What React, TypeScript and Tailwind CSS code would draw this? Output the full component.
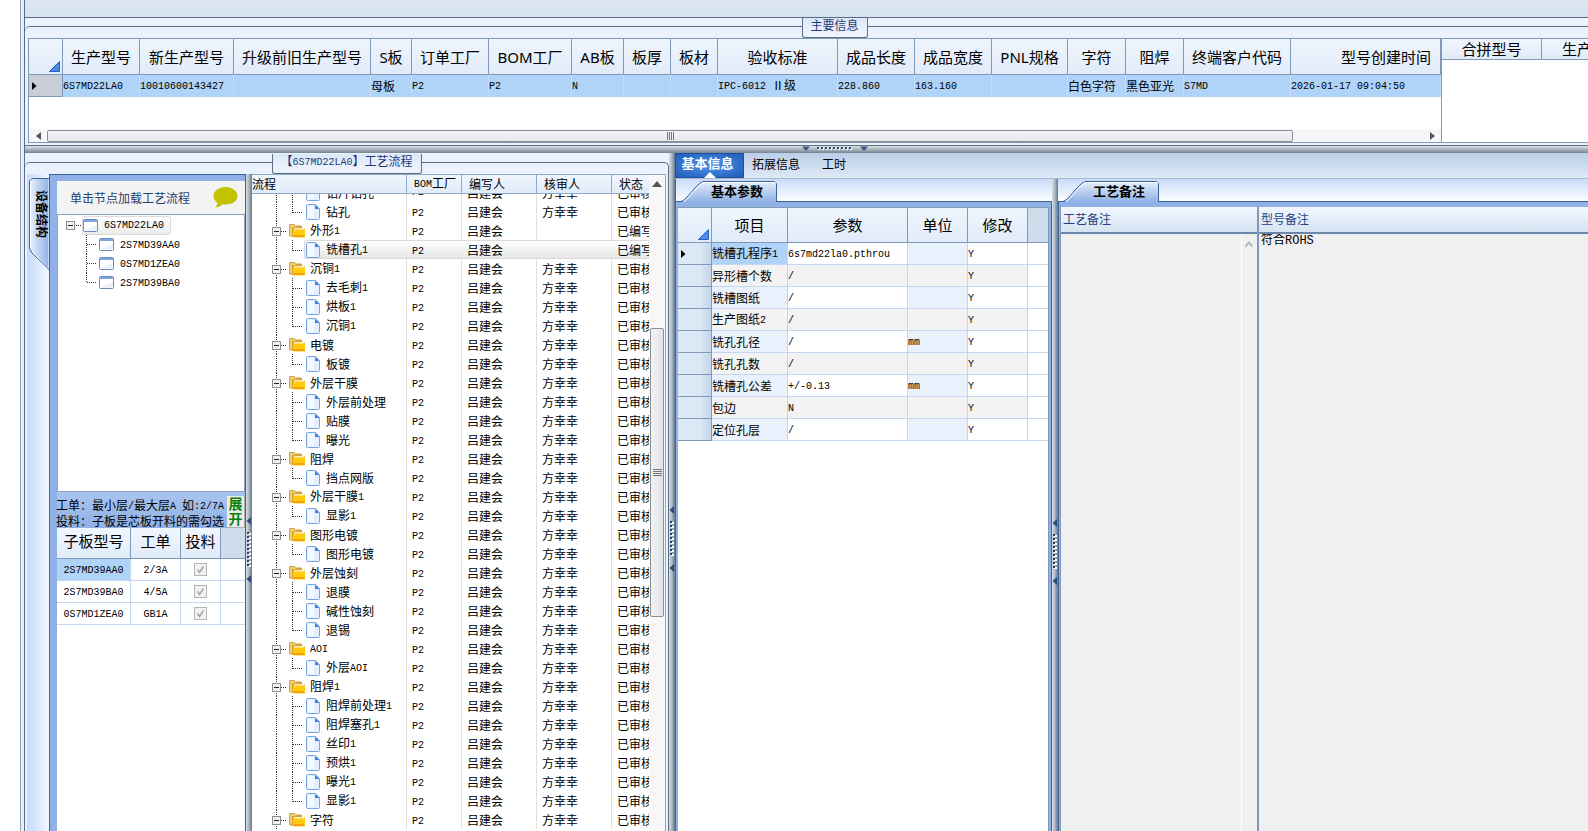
import { Fragment, type ReactNode } from "react";

/** A row of the process tree: a folder groups the steps that follow it. */
interface ProcessRow {
    name: string;
    kind: "folder" | "step";
    /** Last step of its folder, so the guide line stops here. */
    last?: boolean;
    reviewer?: string;
    status?: string;
    selected?: boolean;
}

const mainColumns = [
    { label: "生产型号", width: "w-[77px]", value: "6S7MD22LA0" },
    { label: "新生产型号", width: "w-[94px]", value: "10010600143427" },
    { label: "升级前旧生产型号", width: "w-[137px]", value: "" },
    { label: "S板", width: "w-[41px]", value: "母板" },
    { label: "订单工厂", width: "w-[77px]", value: "P2" },
    { label: "BOM工厂", width: "w-[83px]", value: "P2" },
    { label: "AB板", width: "w-[52px]", value: "N" },
    { label: "板厚", width: "w-[47px]", value: "" },
    { label: "板材", width: "w-[47px]", value: "" },
    { label: "验收标准", width: "w-[120px]", value: "IPC-6012 Ⅱ级" },
    { label: "成品长度", width: "w-[77px]", value: "228.860" },
    { label: "成品宽度", width: "w-[77px]", value: "163.160" },
    { label: "PNL规格", width: "w-[76px]", value: "" },
    { label: "字符", width: "w-[58px]", value: "白色字符" },
    { label: "阻焊", width: "w-[58px]", value: "黑色亚光" },
    { label: "终端客户代码", width: "w-[107px]", value: "S7MD" },
    { label: "型号创建时间", width: "w-[150px]", value: "2026-01-17 09:04:50", right: true },
];

const childBoards = ["2S7MD39AA0", "0S7MD1ZEA0", "2S7MD39BA0"];

const workOrders = [
    { board: "2S7MD39AA0", order: "2/3A" },
    { board: "2S7MD39BA0", order: "4/5A" },
    { board: "0S7MD1ZEA0", order: "GB1A" },
];

const folder = (name: string): ProcessRow => ({ name, kind: "folder" });
const step = (name: string, last = false): ProcessRow => ({ name, kind: "step", last });

const processRows: ProcessRow[] = [
    step("钻片钻孔"),
    step("钻孔", true),
    { name: "外形1", kind: "folder", reviewer: "", status: "已编写" },
    { name: "铣槽孔1", kind: "step", last: true, reviewer: "", status: "已编写", selected: true },
    folder("沉铜1"),
    step("去毛刺1"),
    step("烘板1"),
    step("沉铜1", true),
    folder("电镀"),
    step("板镀", true),
    folder("外层干膜"),
    step("外层前处理"),
    step("贴膜"),
    step("曝光", true),
    folder("阻焊"),
    step("挡点网版", true),
    folder("外层干膜1"),
    step("显影1", true),
    folder("图形电镀"),
    step("图形电镀", true),
    folder("外层蚀刻"),
    step("退膜"),
    step("碱性蚀刻"),
    step("退锡", true),
    folder("AOI"),
    step("外层AOI", true),
    folder("阻焊1"),
    step("阻焊前处理1"),
    step("阻焊塞孔1"),
    step("丝印1"),
    step("预烘1"),
    step("曝光1"),
    step("显影1", true),
    folder("字符"),
];

const parameters = [
    { name: "铣槽孔程序1", value: "6s7md22la0.pthrou", unit: "" },
    { name: "异形槽个数", value: "/", unit: "" },
    { name: "铣槽图纸", value: "/", unit: "" },
    { name: "生产图纸2", value: "/", unit: "" },
    { name: "铣孔孔径", value: "/", unit: "mm" },
    { name: "铣孔孔数", value: "/", unit: "" },
    { name: "铣槽孔公差", value: "+/-0.13", unit: "mm" },
    { name: "包边", value: "N", unit: "" },
    { name: "定位孔层", value: "/", unit: "" },
];

/** Sets latin runs in the narrow mono face and leaves Chinese in the body face. */
function Txt({ children }: { children: string }) {
    return (
        <>
            {children.split(/([\x20-\x7e]+)/).map((part, i) =>
                i % 2 ? (
                    <span key={i} className="align-[1px] font-['Liberation_Mono'] text-[10px] whitespace-pre">
                        {part}
                    </span>
                ) : (
                    <Fragment key={i}>{part}</Fragment>
                )
            )}
        </>
    );
}

function BoardIcon() {
    return (
        <svg width="15" height="13" viewBox="0 0 15 13" className="shrink-0">
            <rect x="0.5" y="0.5" width="14" height="12" rx="1" fill="#fff" stroke="#6a8cc0" />
            <path d="M1 11.5h13V6z" fill="#e8f1fc" />
            <rect x="1" y="1" width="13" height="2" fill="#7ea6dd" />
        </svg>
    );
}

function FolderIcon() {
    return (
        <svg width="16" height="14" viewBox="0 0 16 14" className="shrink-0">
            <path d="M0.5 12V0.500h5l1 1.500h6v10z" fill="#f3cf70" stroke="#c9a353" />
            <path d="M3 13V3h4l1-1h5v2h2.500v9z" fill="#d9a13a" />
            <path d="M5 4h10v2H5z" fill="#fff0b8" />
            <rect x="4" y="5.500" width="12" height="8" rx="0.500" fill="#ffcb0a" />
            <path d="M4.500 11h11v2h-11z" fill="#f5a20a" />
        </svg>
    );
}

function PageIcon() {
    return (
        <svg width="14" height="16" viewBox="0 0 14 16" className="shrink-0">
            <path d="M1.500 0.500H9.500L13.500 4.500V14.500a1 1 0 0 1-1 1H1.500a1 1 0 0 1-1-1V1.500a1 1 0 0 1 1-1z" fill="#e3efff" stroke="#78a5e4" />
            <path d="M2 2h6v12H2z" fill="#fafdff" opacity="0.700" />
            <path d="M9 1v4h4.500z" fill="#3f7ee0" />
        </svg>
    );
}

const dots = { stroke: "#333", strokeDasharray: "1 1" };

function MinusBox({ x, y }: { x: number; y: number }) {
    return (
        <g>
            <rect x={x + 0.5} y={y + 0.5} width="8" height="8" fill="#f1f1f1" stroke="#8e8e8e" />
            <path d={`M${x + 2} ${y + 4.5}h5`} stroke="#222" />
        </g>
    );
}

function HeaderCorner() {
    return (
        <svg width="11" height="11" viewBox="0 0 11 11" className="mr-[2px] mb-[2px] ml-auto">
            <path d="M10.500 0.500v10h-10z" fill="#4a8ae8" stroke="#2a5fb8" />
        </svg>
    );
}

function RowPointer() {
    return (
        <svg width="5" height="8" viewBox="0 0 5 8" className="ml-[3px]">
            <path d="M0 0l4.500 4L0 8z" fill="#000" />
        </svg>
    );
}

/** The grip in the middle of a splitter: two arrows with a dotted bar between them. */
function SplitterGrip({ vertical = false }: { vertical?: boolean }) {
    const bars = Array.from({ length: 9 }, (_, i) => i * 4);
    return vertical ? (
        <svg width="6" height="66" viewBox="0 0 6 66" className="shrink-0">
            <path d="M5 0v8L0.500 4zM5 58v8L0.500 62z" fill="#2f4a7c" />
            {bars.map(y => (
                <g key={y}>
                    <rect x="2" y={y + 16} width="3" height="2" fill="#fff" />
                    <rect x="1" y={y + 15} width="2" height="2" fill="#27406f" />
                </g>
            ))}
        </svg>
    ) : (
        <svg width="66" height="6" viewBox="0 0 66 6" className="shrink-0">
            <path d="M0 0.500h8L4 5zM58 0.500h8L62 5z" fill="#3b5589" />
            {bars.map(x => (
                <g key={x}>
                    <rect x={x + 16} y="2" width="2" height="2" fill="#fff" />
                    <rect x={x + 15} y="1" width="2" height="2" fill="#3b4f78" />
                </g>
            ))}
        </svg>
    );
}

function VerticalSplitter() {
    return (
        <div className="flex w-[6px] shrink-0 items-center bg-linear-to-r from-[#d9e0e4] via-[#a9b5bf] to-[#64788c]">
            <SplitterGrip vertical />
        </div>
    );
}

function GroupTitle({ children }: { children: string }) {
    return (
        <h2 className="absolute -top-[9px] left-1/2 z-10 h-[20px] -translate-x-1/2 rounded-b-[3px] border border-t-0 border-[#5a6d87] bg-linear-to-b from-[#dce8f7] to-[#f1f6fd] px-[8px] leading-[13px] whitespace-nowrap text-[#1f3a78]">
            <Txt>{children}</Txt>
        </h2>
    );
}

/** Tab strip with one slanted tab. */
function SlantTab({ children }: { children: string }) {
    return (
        <div className="relative h-[23px] shrink-0 border-b border-[#3c639c] bg-linear-to-b from-[#c9dbfa] to-[#fbfdff] pt-[2px] pl-[5px]">
            <svg width="97" height="21" viewBox="0 0 97 21" className="absolute top-[2px] left-[5px]">
                <defs>
                    <linearGradient id="slant" x2="0" y2="1">
                        <stop offset="0" stopColor="#e4effc" />
                        <stop offset="1" stopColor="#8fb1e5" />
                    </linearGradient>
                </defs>
                <path d="M0 21C6 20 14 4 22 0.500H93.500L95.500 2.500V21z" fill="url(#slant)" />
                <path d="M0 20.500C6 19 14 4 22 0.500H93.500L95.500 2.500V21" fill="none" stroke="#3c639c" />
                <path d="M3 20.500C9 17 16 4 23 1.500H94.500" fill="none" stroke="#fff" />
            </svg>
            <button type="button" className="relative ml-[30px] h-[20px] text-[13px] leading-[18px] font-bold text-black">
                {children}
            </button>
        </div>
    );
}

function MainInfo() {
    return (
        <section className="relative flex h-[128px] shrink-0 flex-col bg-[#eaf3fd] pt-[8px]">
            <div className="relative flex min-h-0 flex-1 flex-col rounded-tl-[5px] border-t border-b border-[#5a6d87] pt-[11px] pb-[2px] pl-[3px]">
                <GroupTitle>主要信息</GroupTitle>
                <div className="flex min-h-0 flex-1 border-y border-l border-[#8199b8] bg-white">
                    <div className="flex w-[1413px] shrink-0 flex-col border-r border-[#8199b8]">
                        <table className="w-full table-fixed border-separate border-spacing-0">
                            <thead>
                                <tr className="h-[36px] bg-linear-to-b from-[#eff5fd] to-[#e0ebf9]">
                                    <th className="w-[34px] border-r border-b border-[#8199b8] p-0 align-bottom">
                                        <HeaderCorner />
                                    </th>
                                    {mainColumns.map(col => (
                                        <th
                                            key={col.label}
                                            className={`${col.width} ${col.right ? "pr-[9px] text-right" : "text-center"} border-r border-b border-[#8199b8] p-0 font-[Noto_Sans,Noto_Sans_CJK_SC,sans-serif] text-[15px] font-normal whitespace-nowrap`}
                                        >
                                            {col.label}
                                        </th>
                                    ))}
                                </tr>
                            </thead>
                            <tbody>
                                <tr className="h-[22px] bg-[#b0d3f8]">
                                    <td className="border-r border-b border-[#8199b8] bg-[#c8ced5] p-0">
                                        <RowPointer />
                                    </td>
                                    {mainColumns.map(col => (
                                        <td key={col.label} className="border-r border-[#c4dcf7] p-0 whitespace-nowrap">
                                            <Txt>{col.value}</Txt>
                                        </td>
                                    ))}
                                </tr>
                            </tbody>
                        </table>
                        <div className="mt-auto flex h-[13px] items-center bg-[#f5f6f7] pr-[6px] pl-[7px]">
                            <svg width="5" height="8" viewBox="0 0 5 8"><path d="M5 0v8L0 4z" fill="#555" /></svg>
                            <div className="ml-[6px] flex h-[12px] w-[1246px] items-center justify-center gap-px rounded-xs border border-[#8a8f96] bg-linear-to-b from-[#f4f5f7] to-[#e6e8ec]">
                                {[0, 1, 2, 3].map(i => <i key={i} className="h-[8px] w-px bg-[#777]" />)}
                            </div>
                            <svg width="5" height="8" viewBox="0 0 5 8" className="ml-auto"><path d="M0 0v8l5-4z" fill="#555" /></svg>
                        </div>
                    </div>
                    <div className="min-w-0 flex-1 overflow-hidden">
                        <table className="w-full table-fixed border-separate border-spacing-0">
                            <thead>
                                <tr className="h-[21px] bg-linear-to-b from-[#eff5fd] to-[#e0ebf9] text-[15px] leading-[18px]">
                                    <th className="w-[100px] border-r border-b border-[#8199b8] p-0 text-center font-normal">合拼型号</th>
                                    <th className="border-b border-[#8199b8] p-0 pl-[20px] text-left font-normal">生产型号</th>
                                </tr>
                            </thead>
                        </table>
                    </div>
                </div>
            </div>
        </section>
    );
}

function BoardTree() {
    return (
        <ul className="h-[278px] shrink-0 border border-[#8f9fc0] bg-white pt-px pl-[8px]">
            <li>
                <div className="flex h-[19px] items-center">
                    <button type="button" aria-label="6S7MD22LA0" className="shrink-0">
                        <svg width="16" height="19" viewBox="0 0 16 19">
                            <path d="M10 9.500h6" {...dots} />
                            <MinusBox x={0} y={5} />
                        </svg>
                    </button>
                    <span className="flex h-[19px] items-center gap-[6px] rounded-xs border border-[#dcdcdc] bg-linear-to-b from-white to-[#ececec] pr-[6px]">
                        <BoardIcon />
                        <Txt>6S7MD22LA0</Txt>
                    </span>
                </div>
                <ul>
                    {childBoards.map((board, i) => (
                        <li key={board} className="flex h-[19px] items-center">
                            <svg width="33" height="19" viewBox="0 0 33 19" className="shrink-0">
                                <path d={`M20.500 0V${i === childBoards.length - 1 ? 10 : 19}M21 9.500h10`} {...dots} />
                            </svg>
                            <BoardIcon />
                            <span className="ml-[6px]"><Txt>{board}</Txt></span>
                        </li>
                    ))}
                </ul>
            </li>
        </ul>
    );
}

function WorkOrders() {
    const head = "border-r border-b border-[#8199b8] p-0 pb-[4px] text-center text-[15px] font-normal";
    const cell = "border-r border-b border-[#c5d7f0] p-0 text-center";
    return (
        <table className="w-full table-fixed border-separate border-spacing-0">
            <thead>
                <tr className="h-[31px] bg-linear-to-b from-[#f1f6fd] to-[#e0ebf9]">
                    <th className={`w-[74px] ${head}`}>子板型号</th>
                    <th className={`w-[50px] ${head}`}>工单</th>
                    <th className={`w-[40px] ${head}`}>投料</th>
                    <th className="border-b border-[#8199b8] bg-[#cfdcec] p-0" />
                </tr>
            </thead>
            <tbody>
                {workOrders.map((row, i) => (
                    <tr key={row.board} className="h-[22px]">
                        <td className={`${cell} ${i === 0 ? "bg-[#b0d3f8]" : ""}`}><Txt>{row.board}</Txt></td>
                        <td className={cell}><Txt>{row.order}</Txt></td>
                        <td className={cell}>
                            <span className="relative mx-auto block size-[13px]">
                                <input
                                    type="checkbox"
                                    aria-label={row.board}
                                    defaultChecked
                                    disabled
                                    className="block size-[13px] appearance-none border border-[#b4b4b4] bg-[#f2f2f2]"
                                />
                                <svg width="13" height="13" viewBox="0 0 13 13" className="pointer-events-none absolute inset-0">
                                    <path d="M3.500 6.500l2 3 4-6" fill="none" stroke="#a3a3a3" strokeWidth="1.500" />
                                </svg>
                            </span>
                        </td>
                        <td className="border-b border-[#c5d7f0] p-0" />
                    </tr>
                ))}
            </tbody>
        </table>
    );
}

function DevicePanel() {
    return (
        <div className="flex w-[219px] shrink-0">
            <div className="relative w-[22px] shrink-0 bg-linear-to-r from-[#c6dafb] to-[#f2f7ff]">
                <svg width="20" height="92" viewBox="0 0 20 92" className="absolute top-[4px] right-0">
                    <defs>
                        <linearGradient id="side">
                            <stop offset="0" stopColor="#e4effc" />
                            <stop offset="1" stopColor="#8fb1e5" />
                        </linearGradient>
                    </defs>
                    <path d="M20 0.500H4L1.500 3V70L4 75L20 91z" fill="url(#side)" stroke="#fff" />
                    <path d="M20 0.500H3L0.500 3V70L3 75L20 91.500" fill="none" stroke="#3c639c" />
                </svg>
                <button type="button" className="absolute top-[16px] left-[8px] text-[12px] leading-[14px] font-bold [writing-mode:vertical-rl] [text-orientation:sideways]">
                    设备结构
                </button>
            </div>
            <div className="flex min-w-0 flex-1 flex-col border-x border-t border-[#3c639c] bg-[#8fb1e5] pt-[6px] pl-[7px]">
                <div className="flex h-[33px] shrink-0 items-center bg-[#f3f3f3] pr-[7px] pl-[13px] text-[#26406e]">
                    <span>单击节点加载工艺流程</span>
                    <svg width="25" height="21" viewBox="0 0 25 21" className="ml-auto">
                        <path d="M12.500 0C19 0 24.500 4 24.500 9S19 17.500 12.500 17.500c-1 0-2-.1-3-.3C8 19 5 20.500 2 20.500c1.500-1.200 2.300-2.800 2.300-4.800C1.800 14 .5 11.600.5 9 .5 4 6 0 12.500 0z" fill="#c2c200" />
                    </svg>
                </div>
                <BoardTree />
                <div className="flex h-[36px] shrink-0 justify-between bg-linear-to-b from-[#a9c4ee] to-[#8fb1e5] pt-[4px]">
                    <p className="-ml-px pt-[2px] leading-[14px] whitespace-nowrap text-black">
                        <Txt>工单：最小层/最大层A 如:2/7A</Txt>
                        <br />
                        <Txt>投料：子板是芯板开料的需勾选</Txt>
                    </p>
                    <button type="button" className="flex h-[32px] w-[18px] shrink-0 flex-col items-center border-r border-b border-[#aaa] bg-[#ececec] text-[14px] leading-[15px] font-bold text-[#0a820a]">
                        <span>展</span>
                        <span>开</span>
                    </button>
                </div>
                <div className="flex-1 bg-white">
                    <WorkOrders />
                </div>
            </div>
        </div>
    );
}

/** Tree guides, icon and name of one process row. */
function ProcessName({ row }: { row: ProcessRow }) {
    if (row.kind === "folder") {
        return (
            <div className="flex h-[19px] shrink-0 items-center">
                <button type="button" aria-label={row.name} className="shrink-0">
                    <svg width="37" height="19" viewBox="0 0 37 19" className="block">
                        <path d="M24.500 0v19M29 10.500h6" {...dots} />
                        <MinusBox x={20} y={6} />
                    </svg>
                </button>
                <FolderIcon />
                <span className="ml-[5px]"><Txt>{row.name}</Txt></span>
            </div>
        );
    }
    return (
        <div className="flex h-[19px] shrink-0 items-center">
            <svg width="52" height="19" viewBox="0 0 52 19" className="block shrink-0">
                <path d={`M24.500 0v19M40.500 0V${row.last ? 11 : 19}M41 10.500h10`} {...dots} />
            </svg>
            <div className={row.selected ? "flex h-[19px] flex-1 items-center rounded-l-xs border border-r-0 border-[#dadada] bg-linear-to-b from-white to-[#e6e6e6] pl-px" : "flex flex-1 items-center pl-[2px]"}>
                <PageIcon />
                <span className="ml-[6px]"><Txt>{row.name}</Txt></span>
            </div>
        </div>
    );
}

function ProcessTable() {
    const head = "border-r border-b border-[#8fa9c8] p-0 text-left leading-[16px] font-normal";
    return (
        <table className="w-full table-fixed border-separate border-spacing-0">
            <thead>
                <tr className="h-[18px] bg-linear-to-b from-[#eff5fd] to-[#e0ebf9]">
                    <th className={`w-[155px] ${head}`}>流程</th>
                    <th className={`w-[55px] pl-[7px]! ${head}`}><Txt>BOM工厂</Txt></th>
                    <th className={`w-[75px] pl-[7px]! ${head}`}>编写人</th>
                    <th className={`w-[75px] pl-[7px]! ${head}`}>核审人</th>
                    <th className="border-b border-[#8fa9c8] p-0 pl-[7px] text-left leading-[16px] font-normal">状态</th>
                </tr>
            </thead>
            <tbody>
                {processRows.map((row, i) => {
                    // the first row is scrolled half under the header
                    const box = i === 0 ? "flex h-[8px] flex-col justify-end overflow-hidden" : "flex h-[19px] flex-col overflow-hidden";
                    const cell = row.selected
                        ? "border-y border-[#dadada] bg-linear-to-b from-white to-[#e6e6e6] p-0"
                        : "border-r border-[#e0e0e0] p-0";
                    const inner = (text: ReactNode) => (
                        <div className={row.selected ? "h-[17px] overflow-hidden leading-[17px]" : `${box} leading-[19px]`}>
                            <span className="block shrink-0 pl-[5px] whitespace-nowrap">{text}</span>
                        </div>
                    );
                    return (
                        <tr key={i}>
                            <td className={row.selected ? "p-0" : cell}>
                                <div className={box}><ProcessName row={row} /></div>
                            </td>
                            <td className={cell}>{inner(<Txt>P2</Txt>)}</td>
                            <td className={cell}>{inner("吕建会")}</td>
                            <td className={cell}>{inner(row.reviewer ?? "方幸幸")}</td>
                            <td className={`${cell} border-r-0!`}>{inner(row.status ?? "已审核")}</td>
                        </tr>
                    );
                })}
            </tbody>
        </table>
    );
}

function ProcessGroup() {
    return (
        <section className="flex w-[644px] shrink-0 bg-[#eaf3fd] pt-[9px]">
            <div className="relative flex min-w-0 flex-1 rounded-t-[5px] border-t border-r border-[#5a6d87] pt-[11px] pr-[2px] pl-[2px]">
                <GroupTitle>【6S7MD22LA0】工艺流程</GroupTitle>
                <DevicePanel />
                <VerticalSplitter />
                <div className="flex min-w-0 flex-1 border-t border-r border-[#8fa9c8] bg-white">
                    <div className="min-w-0 flex-1 overflow-hidden"><ProcessTable /></div>
                    <div className="flex w-[16px] shrink-0 flex-col items-center bg-[#f7f7f7] pt-[6px]">
                        <svg width="10" height="6" viewBox="0 0 10 6"><path d="M5 0l5 6H0z" fill="#555" /></svg>
                        <div className="mt-[141px] flex h-[289px] w-[14px] flex-col items-center justify-center gap-px rounded-xs border border-[#8a8f96] bg-linear-to-r from-[#f1f3f5] to-[#dfe3e8]">
                            {[0, 1, 2, 3].map(i => <i key={i} className="h-px w-[9px] bg-[#777]" />)}
                        </div>
                    </div>
                </div>
            </div>
        </section>
    );
}

function ParameterPanel() {
    const head = "border-r border-b border-[#8199b8] p-0 text-center text-[15px] font-normal";
    const cell = "border-r border-b border-[#c5d7f0] p-0 text-left whitespace-nowrap";
    return (
        <section className="flex w-[377px] shrink-0 flex-col border-l border-[#3c639c]">
            <SlantTab>基本参数</SlantTab>
            <div className="flex-1 border-r border-[#3c639c] bg-[#8fb1e5] px-[2px] pt-[5px]">
                <div className="h-full border-t border-r border-[#8199b8] bg-white">
                    <table className="w-full table-fixed border-separate border-spacing-0">
                        <thead>
                            <tr className="h-[35px] bg-linear-to-b from-[#eff5fd] to-[#e0ebf9]">
                                <th className="w-[34px] border-r border-b border-[#8199b8] p-0 align-bottom"><HeaderCorner /></th>
                                <th className={`w-[76px] ${head}`}>项目</th>
                                <th className={`w-[120px] ${head}`}>参数</th>
                                <th className={`w-[60px] ${head}`}>单位</th>
                                <th className={`w-[60px] ${head}`}>修改</th>
                                <th className="border-b border-[#8199b8] bg-[#cfdcec] p-0" />
                            </tr>
                        </thead>
                        <tbody>
                            {parameters.map((row, i) => {
                                const odd = i % 2 === 1;
                                const name = i === 0 ? "bg-[#b0d3f8]" : odd ? "bg-[#f3f3f3]" : "bg-[#e9f2fc]";
                                return (
                                    <tr key={row.name} className="h-[22px]">
                                        <td className="border-r border-b border-[#8199b8] bg-linear-to-r from-[#dbe8f5] from-70% to-[#c3d5ea] p-0">
                                            {i === 0 && <RowPointer />}
                                        </td>
                                        <td className={`${cell} ${name}`}><Txt>{row.name}</Txt></td>
                                        <td className={`${cell} ${odd ? "bg-[#f3f3f3]" : ""}`}><Txt>{row.value}</Txt></td>
                                        <td className={`${cell} ${odd ? "bg-[#f3f3f3]" : "bg-[#e9f2fc]"}`}><Txt>{row.unit}</Txt></td>
                                        <td className={`${cell} ${odd ? "bg-[#f3f3f3]" : ""}`}><Txt>Y</Txt></td>
                                        <td className="border-b border-[#c5d7f0] p-0" />
                                    </tr>
                                );
                            })}
                        </tbody>
                    </table>
                </div>
            </div>
        </section>
    );
}

function NotesPanel() {
    const title = "flex h-[27px] shrink-0 items-center border-b-2 border-[#6c87ab] bg-linear-to-b from-[#f3f8fe] to-[#d6e3f3] pb-[2px] pl-[2px] text-[#26427e]";
    return (
        <section className="flex min-w-0 flex-1 flex-col">
            <SlantTab>工艺备注</SlantTab>
            <div className="flex flex-1 border-l border-[#3c639c] bg-[#8fb1e5] pt-[5px] pl-px">
                <div className="flex w-[198px] shrink-0 flex-col border-r border-l border-[#7f9ab9]">
                    <label htmlFor="process-note" className={title}>工艺备注</label>
                    <div className="flex flex-1 bg-[#f0f0f0]">
                        <textarea id="process-note" readOnly className="block min-w-0 flex-1 resize-none border-r border-white outline-none" />
                        <div className="w-[15px] pt-[7px] pl-[3px]">
                            <svg width="8" height="6" viewBox="0 0 8 6"><path d="M0.500 5.500L4 1.500L7.500 5.500" fill="none" stroke="#bbb" strokeWidth="2" /></svg>
                        </div>
                    </div>
                </div>
                <div className="flex min-w-0 flex-1 flex-col border-l border-[#7f9ab9]">
                    <label htmlFor="model-note" className={title}>型号备注</label>
                    <textarea
                        id="model-note"
                        readOnly
                        defaultValue="符合ROHS"
                        className="block flex-1 resize-none bg-[#f0f0f0] pl-[2px] font-['Liberation_Mono','Noto_Sans_CJK_SC',monospace] text-[12px] leading-[14px] outline-none"
                    />
                </div>
            </div>
        </section>
    );
}

function DetailPane() {
    return (
        <div className="flex min-w-0 flex-1 flex-col">
            <nav className="flex h-[26px] shrink-0 items-stretch border-b border-[#a9b9cf] bg-linear-to-b from-[#bbcfe9] to-[#dfe9f6] text-[12px]">
                <button type="button" className="relative w-[69px] border border-[#1f4f9f] bg-radial from-[#4f93ea] to-[#1f5cb8] pr-[4px] pb-[6px] text-[13px] leading-[16px] font-bold text-white">
                    基本信息
                    <svg width="12" height="6" viewBox="0 0 12 6" className="absolute -bottom-px left-[28px]"><path d="M6 0l6 6H0z" fill="#fff" /></svg>
                </button>
                <button type="button" className="w-[64px] pb-[3px]">拓展信息</button>
                <button type="button" className="w-[52px] pb-[3px]">工时</button>
            </nav>
            <div className="flex min-h-0 flex-1">
                <ParameterPanel />
                <VerticalSplitter />
                <NotesPanel />
            </div>
        </div>
    );
}

export default function App() {
    return (
        <div className="h-screen overflow-hidden bg-white font-['Noto_Sans_CJK_SC',sans-serif] text-[12px] leading-[16px] text-black">
            {/* the window runs on past the right and bottom edges of the view */}
            <div className="-mr-14 ml-5 h-[calc(100vh+94px)] border-l border-[#8fa0b8] bg-[#e6effa] pl-[3px]">
                <main className="flex h-full flex-col border-l border-[#5a6d87]">
                    <div className="h-[18px] shrink-0 border-b border-[#5a6d87] bg-linear-to-b from-[#dde7f4] to-[#d7e2f0]" />
                    <MainInfo />
                    <div className="flex h-[7px] shrink-0 justify-center bg-linear-to-b from-[#dfe5e8] to-[#75848f]">
                        <SplitterGrip />
                    </div>
                    <div className="flex min-h-0 flex-1">
                        <ProcessGroup />
                        <VerticalSplitter />
                        <DetailPane />
                    </div>
                </main>
            </div>
        </div>
    );
}
